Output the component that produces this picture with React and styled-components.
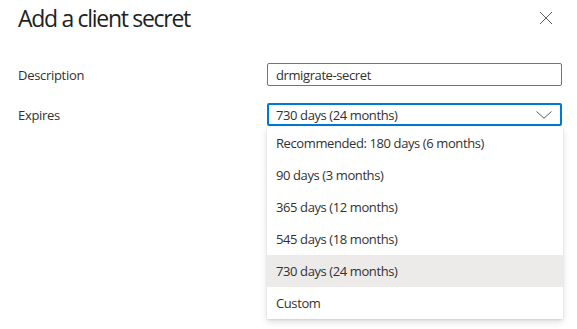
import React from "react";
import styled, { createGlobalStyle } from "styled-components";

const GlobalStyle = createGlobalStyle`
  body {
    margin: 0;
    background: #fff;
    font-family: "Open Sans", "Noto Sans", sans-serif;
    color: #323130;
  }
`;

const Panel = styled.div`
  width: 577px;
  height: 329px;
  padding: 0 15px 0 18px;
  box-sizing: border-box;
  overflow: hidden;
`;

const Header = styled.div`
  display: flex;
  justify-content: space-between;
  align-items: flex-start;
  height: 63px;
`;

const Title = styled.h1`
  margin: 0;
  padding-top: 1px;
  font-size: 23px;
  font-weight: 500;
  letter-spacing: -1.3px;
  line-height: 34px;
  color: #201f1e;
`;

const CloseButton = styled.button`
  border: none;
  background: none;
  padding: 0;
  margin: 11px 9px 0 0;
  width: 14px;
  height: 14px;
  cursor: pointer;
`;

const Form = styled.div`
  display: flex;
  flex-direction: column;
  gap: 17px;
`;

const Row = styled.div`
  display: grid;
  grid-template-columns: 249px 295px;
  align-items: center;
`;

const Label = styled.label`
  font-size: 13px;
  letter-spacing: -0.3px;
`;

const Field = styled.div`
  position: relative;
  height: 23px;
  box-sizing: border-box;
  border: ${(p) => (p.$focused ? "2px solid #0078d4" : "1px solid #86639c")};
  border-radius: 2px;
  display: flex;
  align-items: center;
  justify-content: space-between;
  padding: 0 ${(p) => (p.$focused ? "8px 0 7px" : "8px")};
  font-size: 13px;
  letter-spacing: -0.4px;
`;

const Menu = styled.ul`
  position: absolute;
  left: -2px;
  right: -3px;
  top: 22px;
  margin: 0;
  padding: 0;
  list-style: none;
  background: #fff;
  box-shadow: 0 3px 7px rgba(0, 0, 0, 0.13), 0 1px 2px rgba(0, 0, 0, 0.1);
`;

const Item = styled.li`
  height: 32px;
  display: flex;
  align-items: center;
  padding-left: 9px;
  font-size: 13px;
  letter-spacing: -0.4px;
  background: ${(p) => (p.$selected ? "#edebe9" : "#fff")};
`;

const options = [
  "Recommended: 180 days (6 months)",
  "90 days (3 months)",
  "365 days (12 months)",
  "545 days (18 months)",
  "730 days (24 months)",
  "Custom",
];

export default function App() {
  const selected = "730 days (24 months)";
  return (
    <Panel>
      <GlobalStyle />
      <Header>
        <Title>Add a client secret</Title>
        <CloseButton aria-label="Close">
          <svg width="14" height="14" viewBox="0 0 14 14">
            <path d="M1 1L13 13M13 1L1 13" stroke="#605e5c" strokeWidth="1" />
          </svg>
        </CloseButton>
      </Header>
      <Form>
        <Row>
          <Label>Description</Label>
          <Field>drmigrate-secret</Field>
        </Row>
        <Row>
          <Label>Expires</Label>
          <Field $focused>
            <span>{selected}</span>
            <svg width="16" height="8" viewBox="0 0 16 8">
              <path d="M0.5 0.5L8 7.2L15.5 0.5" fill="none" stroke="#605e5c" strokeWidth="1" />
            </svg>
            <Menu>
              {options.map((o) => (
                <Item key={o} $selected={o === selected}>
                  {o}
                </Item>
              ))}
            </Menu>
          </Field>
        </Row>
      </Form>
    </Panel>
  );
}
